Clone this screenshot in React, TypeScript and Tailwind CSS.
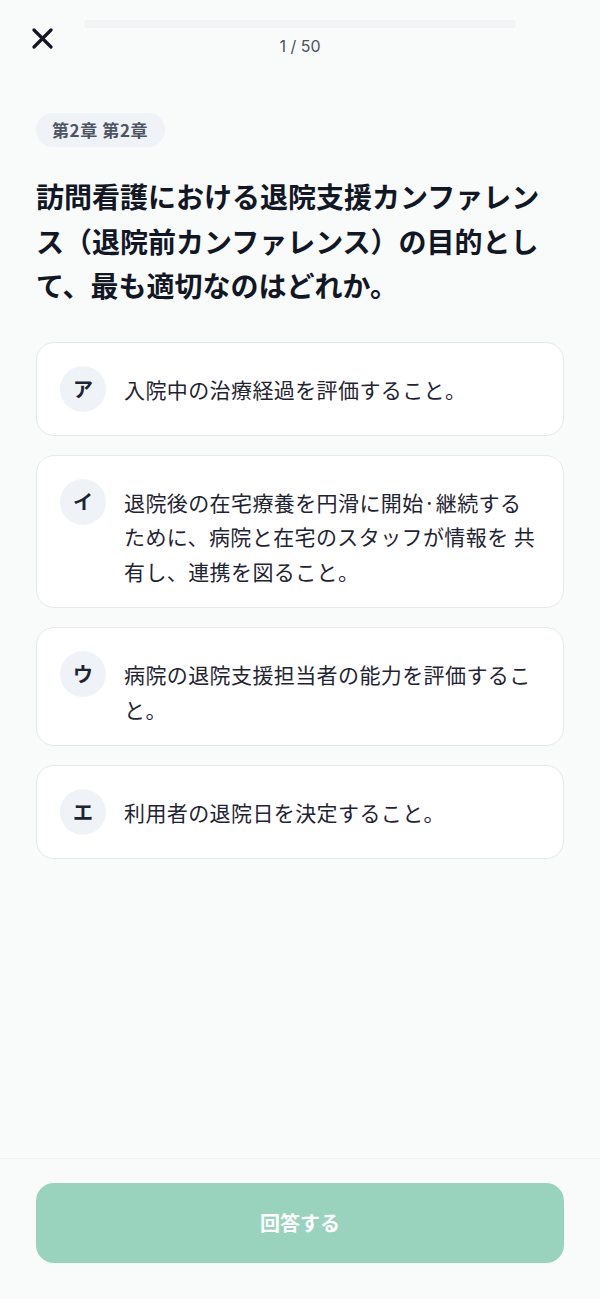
const options = [
	{ label: 'ア', text: '入院中の治療経過を評価すること。' },
	{ label: 'イ', text: '退院後の在宅療養を円滑に開始·継続するために、病院と在宅のスタッフが情報を 共有し、連携を図ること。' },
	{ label: 'ウ', text: '病院の退院支援担当者の能力を評価すること。' },
	{ label: 'エ', text: '利用者の退院日を決定すること。' },
]

function CloseIcon() {
	return (
		<svg width="21" height="21" viewBox="0 0 21 21" fill="none">
			<path d="M2 2L19 19M19 2L2 19" stroke="#141627" strokeWidth="3.2" strokeLinecap="round" />
		</svg>
	)
}

function OptionCard({ label, text }: { label: string; text: string }) {
	return (
		<button className="w-full flex items-start gap-[18px] p-[23px] bg-white border border-[#e6e8ec] rounded-[18px] text-left">
			<span className="w-[46px] h-[46px] flex-shrink-0 flex items-center justify-center rounded-full bg-[#eff3f8] text-[20px] font-bold text-[#1c2333]">
				{label}
			</span>
			<span className="flex-1 mt-[6px] -mb-[4px] text-[21px] tracking-[0.4px] leading-[34.5px] text-[#1f2433]">
				{text}
			</span>
		</button>
	)
}

export default function App() {
	return (
		<div
			className="w-full h-[1299px] flex flex-col bg-[#f9fafa]"
			style={{ fontFamily: '"Noto Sans CJK JP", "Noto Sans", sans-serif' }}
		>
			{/* Header */}
			<div className="flex items-start px-8 pt-5">
				<div className="w-[21px] mt-2 flex-shrink-0">
					<CloseIcon />
				</div>
				<div className="flex-1 mx-[31px] flex flex-col items-center">
					<div className="w-full h-2 rounded-full bg-[#f1f3f5]" />
					<div className="mt-2 text-[16px] leading-5 text-[#4b5260]" style={{ fontFamily: 'Inter, sans-serif' }}>
						1 / 50
					</div>
				</div>
				<div className="w-[21px] flex-shrink-0" />
			</div>

			{/* Content */}
			<div className="flex-1 px-9 pt-[57px]">
				<span className="inline-flex items-center h-[34px] pl-4 pr-[17px] rounded-full bg-[#eff2f6] text-[17px] tracking-[0.6px] font-bold text-[#4b5563]">
					第2章 第2章
				</span>
				<h1 className="mt-[27px] text-[28px] leading-[44.5px] font-bold text-[#121726]">
					訪問看護における退院支援カンファレンス（退院前カンファレンス）の目的として、最も適切なのはどれか。
				</h1>
				<div className="mt-[34px] flex flex-col gap-[19px]">
					{options.map(o => (
						<OptionCard key={o.label} label={o.label} text={o.text} />
					))}
				</div>
			</div>

			{/* Footer */}
			<div className="border-t border-[#f1f2f3] px-9 pt-6 pb-9">
				<button className="w-full h-20 rounded-[18px] bg-[#99d3be] text-white text-[20px] font-bold">
					回答する
				</button>
			</div>
		</div>
	)
}
